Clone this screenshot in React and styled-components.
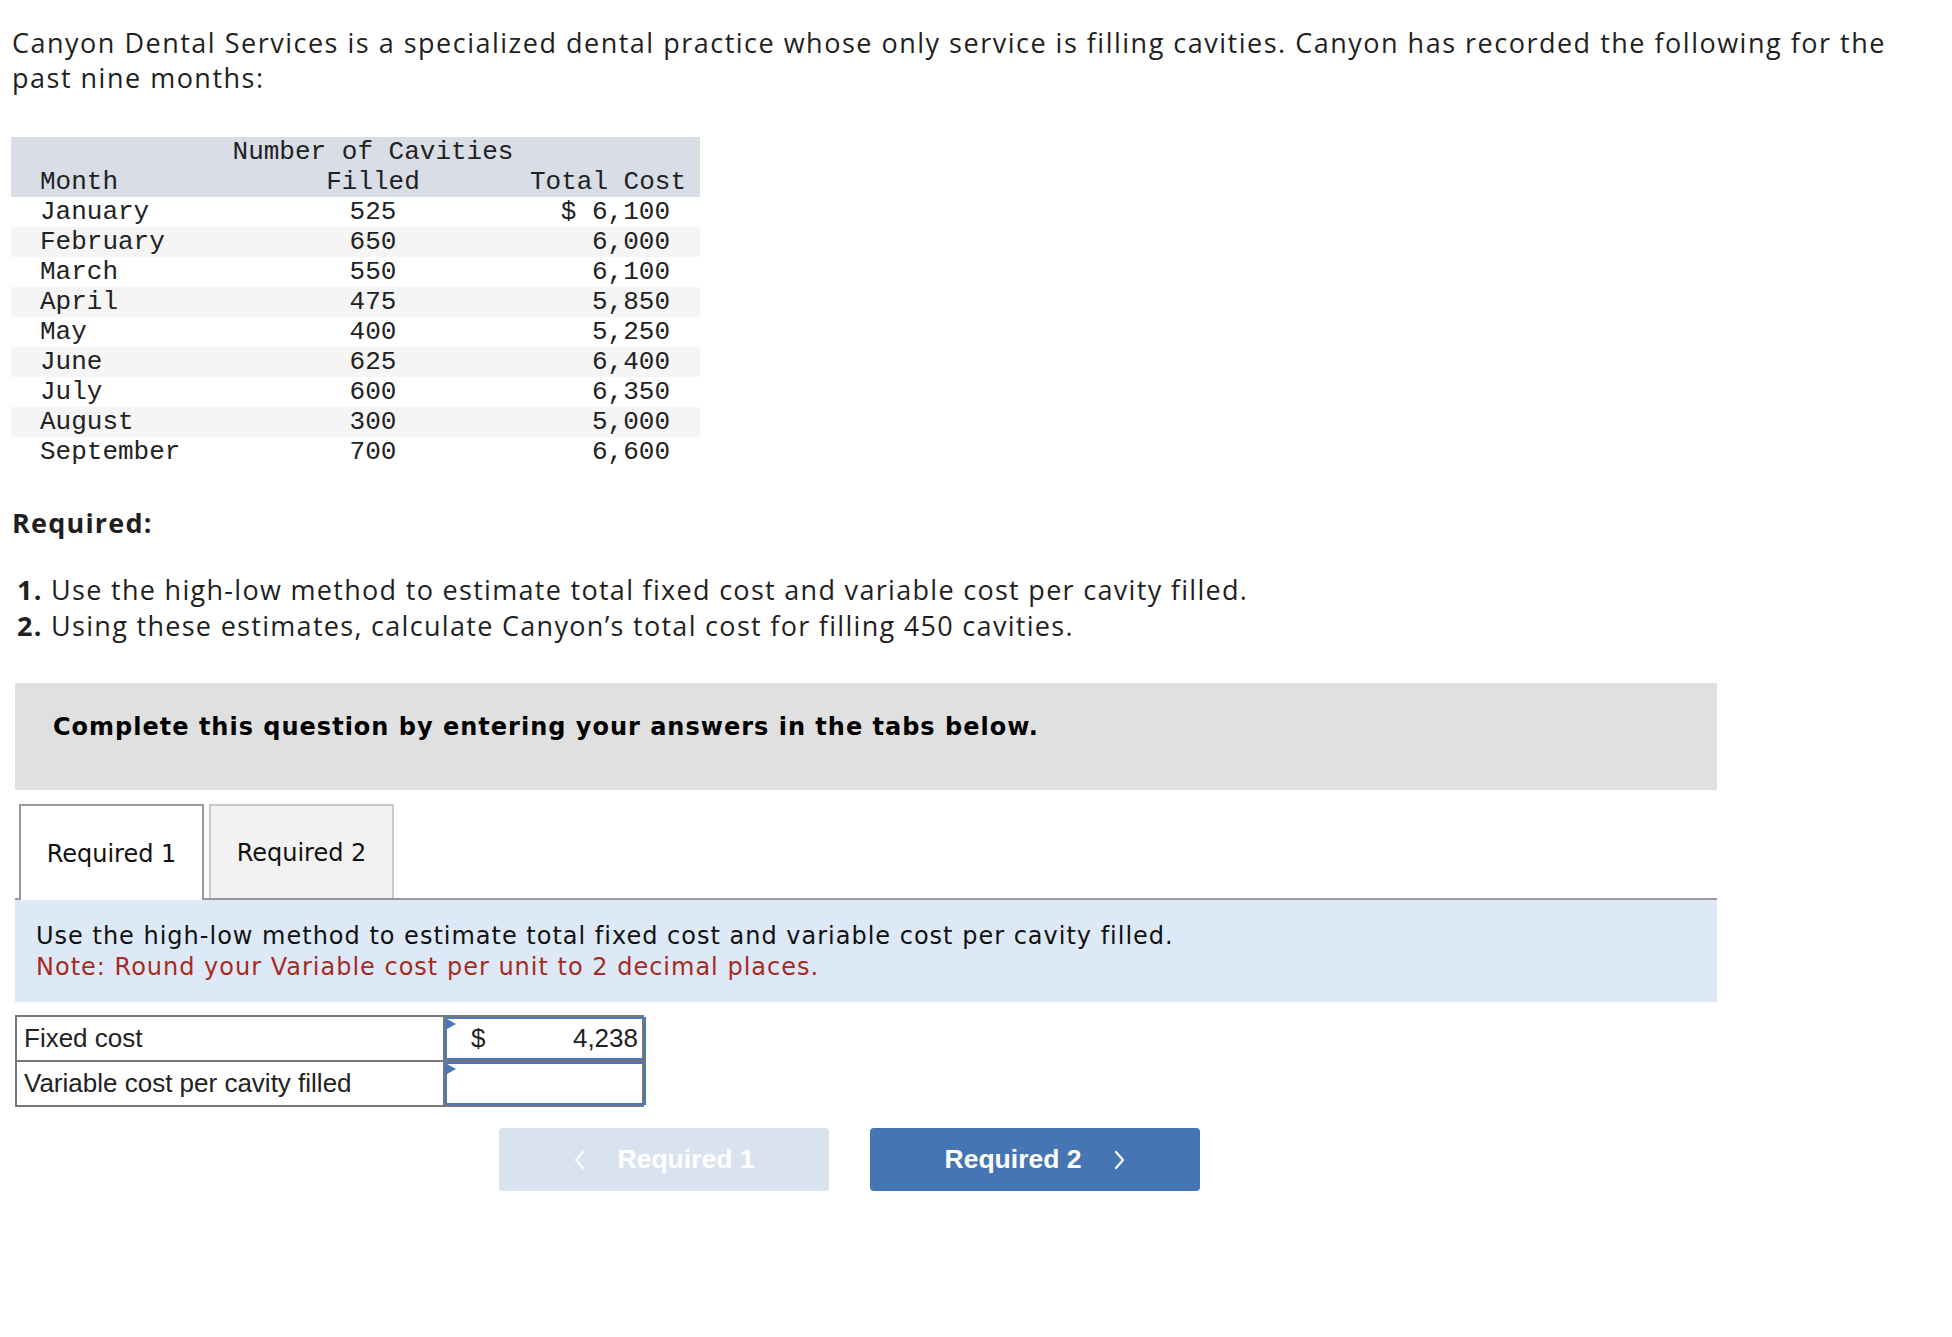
import styled, { createGlobalStyle } from "styled-components";

const GlobalStyle = createGlobalStyle`
  body {
    margin: 0;
    background: #fff;
    color: #1f1f1f;
    font-family: "Open Sans", "Lato", sans-serif;
  }
`;

const Page = styled.div`
  padding: 25px 0 120px 11px;
  width: 1940px;
  box-sizing: border-box;
`;

const Prose = styled.p`
  margin: 0;
  padding-left: 1px;
  font-size: 27px;
  letter-spacing: 1.5px;
  line-height: 35px;
`;

const Intro = styled(Prose)`
  max-width: 1900px;
`;

const DataTable = styled.table`
  margin-top: 42px;
  border-collapse: collapse;
  table-layout: fixed;
  width: 689px;
  font-family: "Liberation Mono", "Courier New", monospace;
  font-size: 26px;
  color: #222;
`;

const HeadRow = styled.tr`
  background: #d9dde6;
`;

const Row = styled.tr`
  background: ${(p) => (p.$striped ? "#f5f5f5" : "#fff")};
`;

const Cell = styled.td`
  height: 30px;
  line-height: 30px;
  padding: 0;
  white-space: nowrap;
  text-align: ${(p) => p.$align || "left"};
  padding-left: ${(p) => (p.$align === "left" || !p.$align ? "29px" : "0")};
  padding-right: ${(p) => (p.$align === "right" ? (p.$head ? "14px" : "30px") : "0")};
`;

const Heading = styled(Prose).attrs({ as: "h3" })`
  margin-top: 38px;
  font-weight: 700;
  letter-spacing: 1.2px;
`;

const Steps = styled.ol`
  list-style: none;
  margin: 32px 0 0;
  padding: 0 0 0 6px;
  font-size: 27px;
  letter-spacing: 1.3px;
  line-height: 36px;

  b {
    font-weight: 700;
  }
`;

const Banner = styled.div`
  margin: 39px 0 0 4px;
  width: 1702px;
  height: 107px;
  box-sizing: border-box;
  padding: 29px 38px 0;
  background: #e0e0e0;
  font-family: "DejaVu Sans", Verdana, sans-serif;
  font-weight: 700;
  font-size: 24px;
  letter-spacing: 1px;
  line-height: 30px;
  color: #000;
`;

const TabList = styled.div`
  display: flex;
  gap: 5px;
  margin: 14px 0 0 4px;
  padding-left: 4px;
  width: 1702px;
  box-sizing: border-box;
  border-bottom: 2px solid #999;
`;

const Tab = styled.div`
  width: 185px;
  box-sizing: border-box;
  display: flex;
  align-items: center;
  justify-content: center;
  padding-top: 2px;
  font-family: "DejaVu Sans", Verdana, sans-serif;
  font-size: 24px;
  color: #111;
  border: 2px solid ${(p) => (p.$active ? "#999" : "#c8c8c8")};
  border-bottom: none;
  background: ${(p) => (p.$active ? "#fff" : "#f2f2f2")};
  margin-bottom: ${(p) => (p.$active ? "-2px" : "0")};
  height: ${(p) => (p.$active ? "96px" : "94px")};
`;

const Instructions = styled.div`
  margin-left: 4px;
  width: 1702px;
  height: 102px;
  box-sizing: border-box;
  padding: 21px 21px 0;
  background: #dde9f7;
  font-family: "DejaVu Sans", Verdana, sans-serif;
  font-size: 24px;
  letter-spacing: 1px;
  line-height: 31px;
  color: #111;
`;

const Note = styled.div`
  color: #a8291f;
`;

const AnswerGrid = styled.div`
  display: grid;
  grid-template-columns: 428px 201px;
  margin: 13px 0 0 4px;
  width: 629px;
  border: 2px solid #777;
  box-sizing: border-box;
  font-family: "Liberation Sans", Arial, sans-serif;
  font-size: 26px;
  color: #222;
`;

const Label = styled.div`
  height: 43px;
  display: flex;
  align-items: center;
  padding-left: 7px;
  border-right: 2px solid #777;
  border-top: ${(p) => (p.$first ? "none" : "2px solid #777")};
`;

const InputCell = styled.div`
  border-top: ${(p) => (p.$first ? "none" : "2px solid #777")};
`;

const InputBox = styled.div`
  position: relative;
  height: 43px;
  box-sizing: border-box;
  border: 2px solid #4a78b8;
  display: flex;
  align-items: center;
  justify-content: space-between;
  padding: 0 6px 0 24px;
`;

const Flag = styled.span`
  position: absolute;
  top: 0;
  left: 0;
  width: 0;
  height: 0;
  border-top: 5px solid transparent;
  border-bottom: 5px solid transparent;
  border-left: 9px solid #4a78b8;
`;

const Nav = styled.div`
  display: flex;
  gap: 41px;
  margin-top: 21px;
  padding-left: 488px;
`;

const NavButton = styled.button`
  width: 330px;
  height: 63px;
  border: none;
  border-radius: 4px;
  display: flex;
  align-items: center;
  justify-content: center;
  gap: 32px;
  font-family: "Liberation Sans", Arial, sans-serif;
  font-weight: 700;
  font-size: 26.5px;
  color: #fff;
  background: ${(p) => (p.$disabled ? "#d9e3ef" : "#4675b4")};
  cursor: ${(p) => (p.$disabled ? "default" : "pointer")};
`;

const Chevron = ({ dir }) => (
  <svg width="12" height="20" viewBox="0 0 12 20" fill="none">
    <path
      d={dir === "left" ? "M9 2 L2 10 L9 18" : "M3 2 L10 10 L3 18"}
      stroke="#fff"
      strokeWidth="2.2"
      strokeLinecap="round"
      strokeLinejoin="round"
    />
  </svg>
);

const months = [
  ["January", "525", "$ 6,100"],
  ["February", "650", "6,000"],
  ["March", "550", "6,100"],
  ["April", "475", "5,850"],
  ["May", "400", "5,250"],
  ["June", "625", "6,400"],
  ["July", "600", "6,350"],
  ["August", "300", "5,000"],
  ["September", "700", "6,600"],
];

export default function App() {
  return (
    <Page>
      <GlobalStyle />
      <Intro>
        Canyon Dental Services is a specialized dental practice whose only service is filling
        cavities. Canyon has recorded the following for the past nine months:
      </Intro>

      <DataTable>
        <colgroup>
          <col style={{ width: "219px" }} />
          <col style={{ width: "286px" }} />
          <col style={{ width: "184px" }} />
        </colgroup>
        <thead>
          <HeadRow>
            <Cell />
            <Cell $align="center">Number of Cavities</Cell>
            <Cell />
          </HeadRow>
          <HeadRow>
            <Cell>Month</Cell>
            <Cell $align="center">Filled</Cell>
            <Cell $align="right" $head>Total Cost</Cell>
          </HeadRow>
        </thead>
        <tbody>
          {months.map(([m, n, c], i) => (
            <Row key={m} $striped={i % 2 === 1}>
              <Cell>{m}</Cell>
              <Cell $align="center">{n}</Cell>
              <Cell $align="right">{c}</Cell>
            </Row>
          ))}
        </tbody>
      </DataTable>

      <Heading>Required:</Heading>
      <Steps>
        <li><b>1.</b> Use the high-low method to estimate total fixed cost and variable cost per cavity filled.</li>
        <li><b>2.</b> Using these estimates, calculate Canyon’s total cost for filling 450 cavities.</li>
      </Steps>

      <Banner>Complete this question by entering your answers in the tabs below.</Banner>

      <TabList>
        <Tab $active>Required 1</Tab>
        <Tab>Required 2</Tab>
      </TabList>

      <Instructions>
        Use the high-low method to estimate total fixed cost and variable cost per cavity filled.
        <Note>Note: Round your Variable cost per unit to 2 decimal places.</Note>
      </Instructions>

      <AnswerGrid>
        <Label $first>Fixed cost</Label>
        <InputCell $first>
          <InputBox>
            <Flag />
            <span>$</span>
            <span>4,238</span>
          </InputBox>
        </InputCell>
        <Label>Variable cost per cavity filled</Label>
        <InputCell>
          <InputBox>
            <Flag />
          </InputBox>
        </InputCell>
      </AnswerGrid>

      <Nav>
        <NavButton $disabled>
          <Chevron dir="left" />
          Required 1
        </NavButton>
        <NavButton>
          Required 2
          <Chevron dir="right" />
        </NavButton>
      </Nav>
    </Page>
  );
}
